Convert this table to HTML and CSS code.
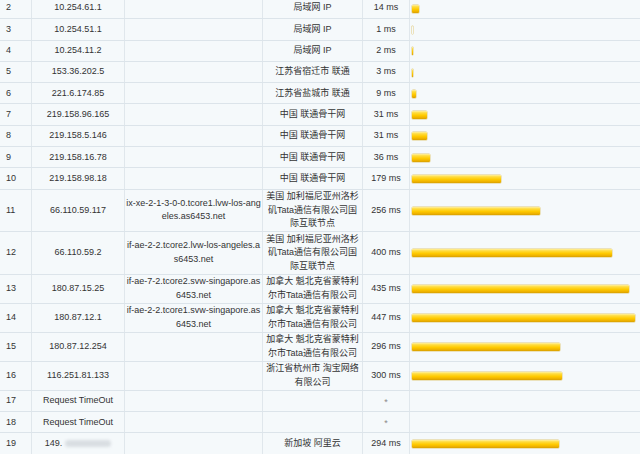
FILE: index.html
```html
<!DOCTYPE html>
<html>
<head>
<meta charset="utf-8">
<link rel="stylesheet" href="styles.css">
</head>
<body>
<div class="table">
  <div class="row"><div class="c n">2</div><div class="c">10.254.61.1</div><div class="c"></div><div class="c">局域网 IP</div><div class="c">14 ms</div><div class="c bar-cell"><span class="bar" style="width:7px"></span></div></div>
  <div class="row"><div class="c n">3</div><div class="c">10.254.51.1</div><div class="c"></div><div class="c">局域网 IP</div><div class="c">1 ms</div><div class="c bar-cell"><span class="bar" style="width:0.5px"></span></div></div>
  <div class="row"><div class="c n">4</div><div class="c">10.254.11.2</div><div class="c"></div><div class="c">局域网 IP</div><div class="c">2 ms</div><div class="c bar-cell"><span class="bar" style="width:1px"></span></div></div>
  <div class="row"><div class="c n">5</div><div class="c">153.36.202.5</div><div class="c"></div><div class="c">江苏省宿迁市 联通</div><div class="c">3 ms</div><div class="c bar-cell"><span class="bar" style="width:1.5px"></span></div></div>
  <div class="row"><div class="c n">6</div><div class="c">221.6.174.85</div><div class="c"></div><div class="c">江苏省盐城市 联通</div><div class="c">9 ms</div><div class="c bar-cell"><span class="bar" style="width:4.5px"></span></div></div>
  <div class="row"><div class="c n">7</div><div class="c">219.158.96.165</div><div class="c"></div><div class="c">中国 联通骨干网</div><div class="c">31 ms</div><div class="c bar-cell"><span class="bar" style="width:15.5px"></span></div></div>
  <div class="row"><div class="c n">8</div><div class="c">219.158.5.146</div><div class="c"></div><div class="c">中国 联通骨干网</div><div class="c">31 ms</div><div class="c bar-cell"><span class="bar" style="width:15.5px"></span></div></div>
  <div class="row"><div class="c n">9</div><div class="c">219.158.16.78</div><div class="c"></div><div class="c">中国 联通骨干网</div><div class="c">36 ms</div><div class="c bar-cell"><span class="bar" style="width:18px"></span></div></div>
  <div class="row"><div class="c n">10</div><div class="c">219.158.98.18</div><div class="c"></div><div class="c">中国 联通骨干网</div><div class="c">179 ms</div><div class="c bar-cell"><span class="bar" style="width:89.5px"></span></div></div>
  <div class="row"><div class="c n">11</div><div class="c">66.110.59.117</div><div class="c"><div class="lines"><div class="ln">ix-xe-2-1-3-0-0.tcore1.lvw-los-ang</div><div class="ln">eles.as6453.net</div></div></div><div class="c"><div class="lines"><div class="ln">美国 加利福尼亚州洛杉</div><div class="ln">矶Tata通信有限公司国</div><div class="ln">际互联节点</div></div></div><div class="c">256 ms</div><div class="c bar-cell"><span class="bar" style="width:128px"></span></div></div>
  <div class="row"><div class="c n">12</div><div class="c">66.110.59.2</div><div class="c"><div class="lines"><div class="ln">if-ae-2-2.tcore2.lvw-los-angeles.a</div><div class="ln">s6453.net</div></div></div><div class="c"><div class="lines"><div class="ln">美国 加利福尼亚州洛杉</div><div class="ln">矶Tata通信有限公司国</div><div class="ln">际互联节点</div></div></div><div class="c">400 ms</div><div class="c bar-cell"><span class="bar" style="width:200px"></span></div></div>
  <div class="row"><div class="c n">13</div><div class="c">180.87.15.25</div><div class="c"><div class="lines"><div class="ln">if-ae-7-2.tcore2.svw-singapore.as</div><div class="ln">6453.net</div></div></div><div class="c"><div class="lines"><div class="ln">加拿大 魁北克省蒙特利</div><div class="ln">尔市Tata通信有限公司</div></div></div><div class="c">435 ms</div><div class="c bar-cell"><span class="bar" style="width:217.5px"></span></div></div>
  <div class="row"><div class="c n">14</div><div class="c">180.87.12.1</div><div class="c"><div class="lines"><div class="ln">if-ae-2-2.tcore1.svw-singapore.as</div><div class="ln">6453.net</div></div></div><div class="c"><div class="lines"><div class="ln">加拿大 魁北克省蒙特利</div><div class="ln">尔市Tata通信有限公司</div></div></div><div class="c">447 ms</div><div class="c bar-cell"><span class="bar" style="width:223.5px"></span></div></div>
  <div class="row"><div class="c n">15</div><div class="c">180.87.12.254</div><div class="c"></div><div class="c"><div class="lines"><div class="ln">加拿大 魁北克省蒙特利</div><div class="ln">尔市Tata通信有限公司</div></div></div><div class="c">296 ms</div><div class="c bar-cell"><span class="bar" style="width:148px"></span></div></div>
  <div class="row"><div class="c n">16</div><div class="c">116.251.81.133</div><div class="c"></div><div class="c"><div class="lines"><div class="ln">浙江省杭州市 淘宝网络</div><div class="ln">有限公司</div></div></div><div class="c">300 ms</div><div class="c bar-cell"><span class="bar" style="width:150px"></span></div></div>
  <div class="row"><div class="c n">17</div><div class="c">Request TimeOut</div><div class="c"></div><div class="c"></div><div class="c star">*</div><div class="c bar-cell"></div></div>
  <div class="row"><div class="c n">18</div><div class="c">Request TimeOut</div><div class="c"></div><div class="c"></div><div class="c star">*</div><div class="c bar-cell"></div></div>
  <div class="row"><div class="c n">19</div><div class="c">149.<span class="blur"></span></div><div class="c"></div><div class="c">新加坡 阿里云</div><div class="c">294 ms</div><div class="c bar-cell"><span class="bar" style="width:147px"></span></div></div>
</div>
</body>
</html>
```

FILE: styles.css
```css
* { box-sizing: border-box; }
html, body {
  margin: 0;
  padding: 0;
  background: #f5f9fb;
}
body {
  font-family: "Liberation Sans", "Noto Sans CJK SC", sans-serif;
  font-size: 9px;
  color: #333;
  overflow: hidden;
}
.table {
  margin-top: -2px;
  width: 640px;
}
.row {
  display: grid;
  grid-template-columns: 31px 93px 138px 100px 47px 1fr;
  min-height: 21.3px;
  border-bottom: 1px solid #dce4ea;
}
.c {
  display: flex;
  align-items: center;
  justify-content: center;
  text-align: center;
  padding: 0.65px 1px;
  line-height: 13.4px;
  border-left: 1px solid #e0e7ec;
  white-space: nowrap;
}
.c.n {
  border-left: none;
  justify-content: flex-start;
  padding-left: 6px;
}
.lines {
  display: flex;
  flex-direction: column;
  align-items: center;
}
.ln {
  height: 13.4px;
  line-height: 13.4px;
}
.bar-cell {
  justify-content: flex-start;
  padding-left: 1.5px;
}
.bar {
  display: block;
  height: 8px;
  margin-top: 1px;
  border-radius: 1px;
  background: linear-gradient(#fff0a0 0%, #ffdc40 22%, #ffca00 55%, #f0b400 80%, #d9a000 100%);
  box-shadow: 0 0 0 0.5px rgba(210, 160, 0, 0.5);
}
.star {
  color: #8a8a8a;
  padding-top: 4px;
}
.blur {
  display: inline-block;
  width: 46px;
  height: 7px;
  margin-left: 3px;
  border-radius: 4px;
  background: #d9dee2;
  filter: blur(1.5px);
}
```
